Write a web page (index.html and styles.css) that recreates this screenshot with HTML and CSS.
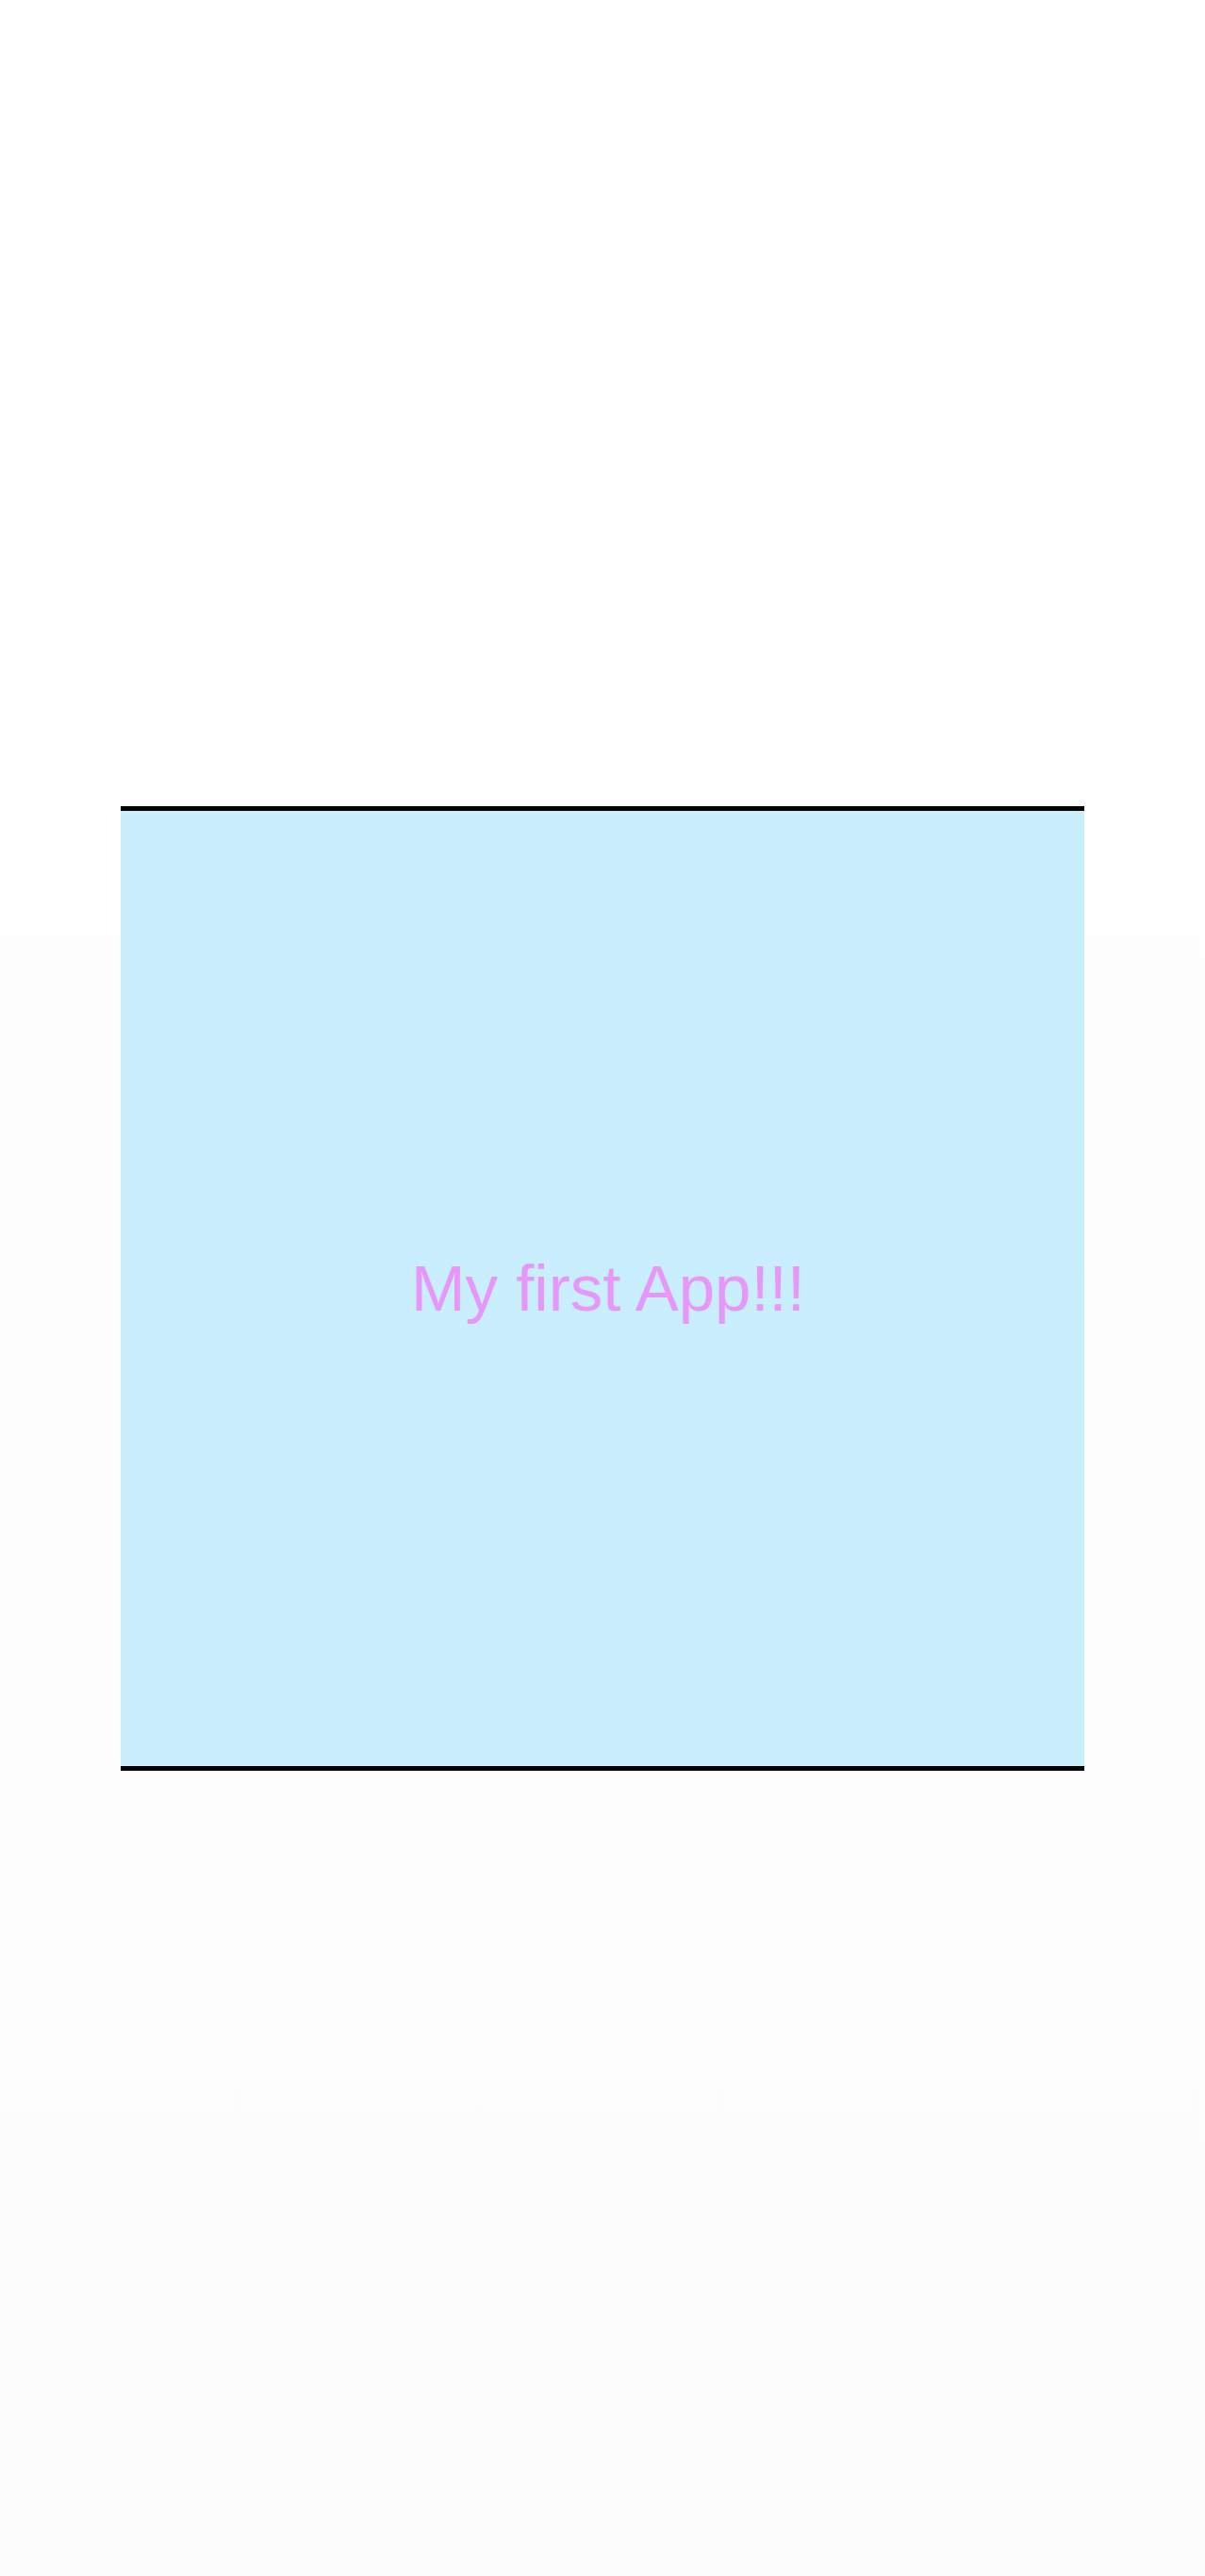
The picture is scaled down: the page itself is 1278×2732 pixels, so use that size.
FILE: index.html
```html
<!DOCTYPE html>
<html>
<head>
<meta charset="utf-8">
<link rel="stylesheet" href="styles.css">
</head>
<body>
<div class="screen">
  <div class="panel">
    <span class="title">My first App!!!</span>
  </div>
</div>
</body>
</html>
```
FILE: styles.css
```css
html, body {
  margin: 0;
  padding: 0;
  background: #ffffff;
}
.screen {
  width: 1278px;
  height: 2732px;
  padding-top: 855px;
  box-sizing: border-box;
  background: linear-gradient(#ffffff, #fcfcfc);
}
.panel {
  margin-left: 128px;
  width: 1022px;
  height: 1023px;
  box-sizing: border-box;
  border-top: 5px solid #000;
  border-bottom: 5px solid #000;
  background: #c9effe;
  display: flex;
  align-items: center;
  justify-content: center;
}
.title {
  font-family: "Liberation Sans", Arial, sans-serif;
  font-size: 69px;
  color: #e796f9;
  line-height: 1;
  margin-left: 12px;
}
```
